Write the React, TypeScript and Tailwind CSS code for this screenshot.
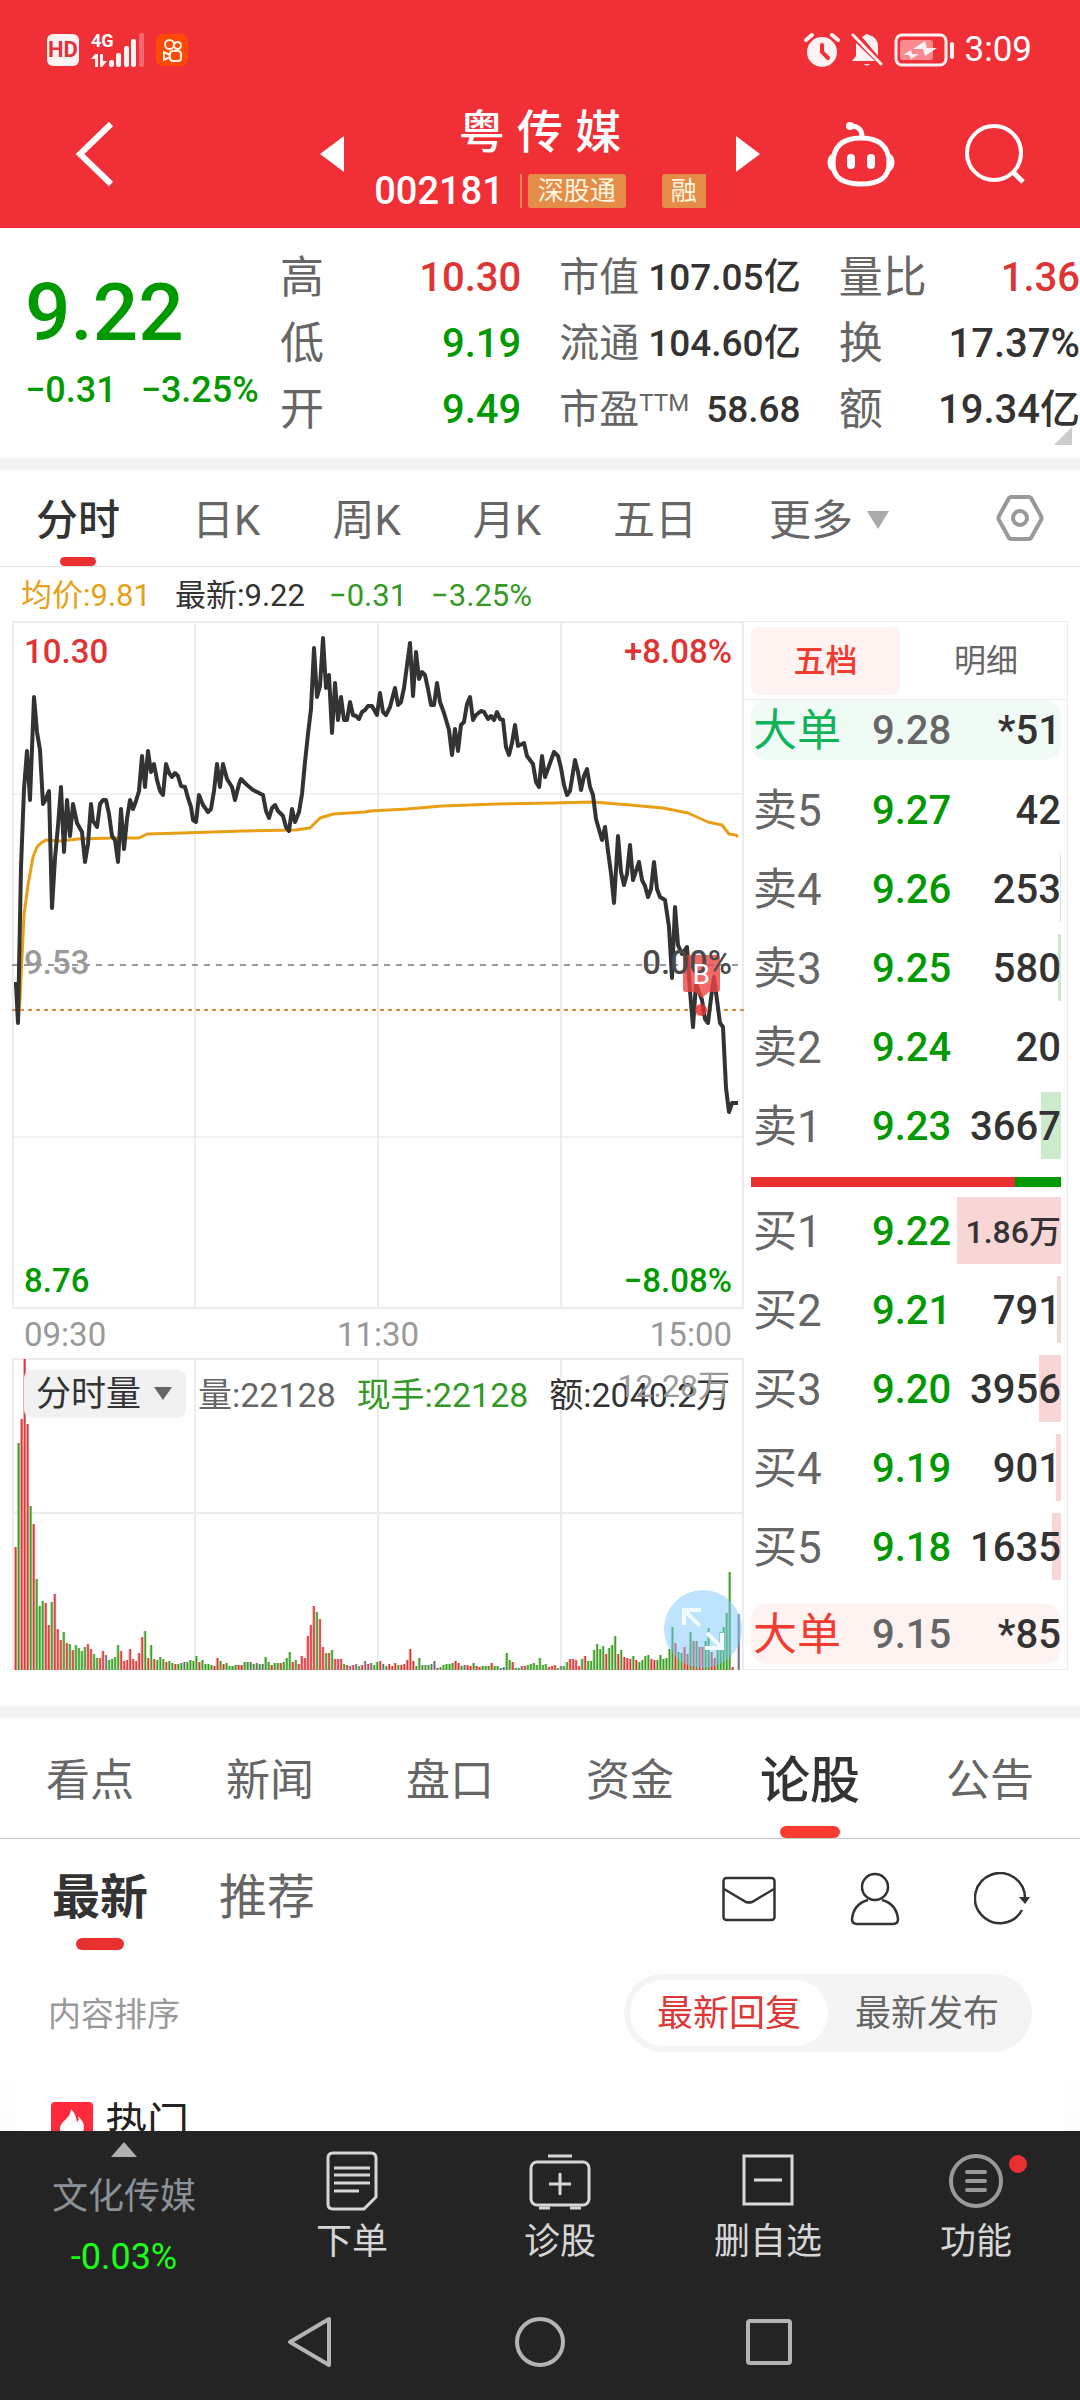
import React, { useState } from 'react'

const priceLine = `2,363 4,363 6,402 9,246 12,168 15,130 18,179 22,76 25,111 28,129 31,183 33,180 37,170 40,287 43,237 46,205 49,166
52,231 55,179 58,215 61,183 65,202 70,211 73,241 76,223 79,183 81,200 85,206 88,183 91,179 94,179 97,193 100,215 103,219
106,241 109,188 112,228 115,198 118,179 121,188 124,180 127,170 130,135 133,166 136,130 139,151 142,143 145,159 148,170
151,174 154,143 157,152 160,156 163,152 166,155 169,165 173,166 176,177 179,186 181,199 184,201 187,174 191,184 196,191
199,188 202,170 205,143 208,166 211,143 215,158 220,166 223,179 227,163 229,158 235,164 241,169 251,174 254,190 257,197
260,187 263,184 266,190 271,195 274,206 277,210 280,188 283,201 287,191 290,173 293,141 296,113 299,88 302,27 305,76
308,65 311,17 314,67 317,54 320,112 323,62 326,99 329,76 332,99 335,99 338,81 341,94 344,95 347,98 350,91 353,89 356,85
360,85 365,94 368,72 371,91 374,94 378,86 383,67 386,84 389,81 392,67 398,22 401,75 404,31 407,58 410,51 413,54 416,68
419,84 422,84 425,62 428,81 432,92 437,109 440,134 443,108 446,130 449,104 452,101 455,83 458,76 461,99 464,94 469,90
472,91 476,98 479,95 482,99 485,91 488,98 491,99 494,126 497,134 500,122 503,104 506,125 512,122 515,135 521,143 524,161
527,166 530,135 533,156 537,145 542,131 546,135 549,147 552,164 555,174 558,170 563,139 566,151 569,169 572,155 575,148
578,166 581,174 584,198 590,219 593,206 596,230 599,252 602,282 606,215 609,251 612,264 615,253 618,224 621,259 627,241
630,259 633,265 636,276 639,268 642,241 645,268 648,276 653,279 657,306 660,357 663,286 666,324 670,333 675,326 678,370
681,406 684,363 690,379 693,398 696,402 699,377 702,356 705,379 708,402 711,406 714,467 717,491 720,482 726,482`

const avgLine = `6,402 8,379 12,294 16,264 21,236 25,226 29,222 34,219 48,220 66,218 101,217 127,217 135,213 170,212 231,210 283,209
298,207 308,197 321,193 353,191 358,190 395,188 430,185 485,183 541,182 581,181 618,184 651,187 676,192 696,201 710,204
717,213 724,214 726,216`

// one entry per minute: r = up, g = down, k = flat
const volume = `r123 g227 r251 r311 r246 g164 r146 g91 g64 g69 r67 r45 g68 r76 r41 r30 g38 r27 g26 r20 g25 g22 g19 g23 r26 r21 g16
g12 r12 r19 k15 g10 g11 g13 g25 r19 r9 r10 r21 r11 r9 r17 r33 g39 r12 g25 r11 g10 g13 g11 r8 g9 g7 r6 g6 g7 k8 g8 g10 g9
g14 r8 g10 g6 g6 g5 r4 r12 g9 r6 g7 g4 g4 g5 r5 r5 g8 g8 k8 g6 k7 g6 k6 g13 g8 r5 g7 g7 r7 g8 g12 g18 r8 g10 r6 r14 r12
r34 r45 r64 g58 r51 r23 g17 r17 g20 r11 r11 r11 g6 r5 k4 r5 k6 g4 r5 k9 r6 k7 g5 g8 r9 k6 g4 r6 r4 r7 g5 r5 r6 r10 r21
r9 g4 g12 k5 g5 g5 k6 k9 r2 g3 g5 g6 g6 g7 r9 r7 g4 k5 r5 r4 g7 r4 r3 g4 g4 g4 r7 g4 g4 k2 k3 g17 g10 r8 g2 g2 k4 r4 g5
g6 g7 g5 g12 g5 g6 r3 r4 r5 g2 k4 g4 g8 r11 r11 r10 r4 g11 r14 g9 g9 g20 g26 g21 g24 r16 g22 g25 g34 r16 g20 r13 r12 r11
g14 r10 g8 g10 g14 g15 r11 r10 g10 g15 g11 g12 g21 g43 r27 g18 g17 r23 r16 g38 r29 g29 r23 r23 g29 g42 r18 r12 g26 g38
g43 g57 g98 r3 k0 k56`.split(/\s+/)

const barColor: Record<string, string> = { r: '#d93636', g: '#3f9a2a', k: '#666b76' }
const barFill: Record<string, string> = { r: '#f7a5a5', g: '#a3d895', k: '#c4c7cf' }

const stats = [
  [
    { k: '高', v: '10.30', c: 'text-[#e03333]' },
    { k: '低', v: '9.19', c: 'text-[#009900]' },
    { k: '开', v: '9.49', c: 'text-[#009900]' },
  ],
  [
    { k: '市值', v: '107.05亿', c: 'text-[#333333]' },
    { k: '流通', v: '104.60亿', c: 'text-[#333333]' },
    { k: '市盈', sup: 'TTM', v: '58.68', c: 'text-[#333333]' },
  ],
  [
    { k: '量比', v: '1.36', c: 'text-[#e03333]' },
    { k: '换', v: '17.37%', c: 'text-[#333333]' },
    { k: '额', v: '19.34亿', c: 'text-[#333333]' },
  ],
]

const sells = [
  { k: '卖5', p: '9.27', q: '42', w: 0 },
  { k: '卖4', p: '9.26', q: '253', w: 1 },
  { k: '卖3', p: '9.25', q: '580', w: 3 },
  { k: '卖2', p: '9.24', q: '20', w: 0 },
  { k: '卖1', p: '9.23', q: '3667', w: 20 },
]

const buys = [
  { k: '买1', p: '9.22', q: '1.86万', w: 104 },
  { k: '买2', p: '9.21', q: '791', w: 4 },
  { k: '买3', p: '9.20', q: '3956', w: 22 },
  { k: '买4', p: '9.19', q: '901', w: 5 },
  { k: '买5', p: '9.18', q: '1635', w: 9 },
]

function StatusBar() {
  return (
    <div className="flex h-8 items-center justify-between pl-[47px] pr-12 text-white">
      <div className="flex h-full items-center">
        <span className="flex h-8 w-8 items-center justify-center rounded-md bg-[#fff2f3] text-[22px] font-bold leading-none text-[#e0333b]">HD</span>
        <div className="ml-3 flex h-[34px] w-5 flex-col justify-between">
          <span className="text-[18px] font-bold leading-4">4G</span>
          <svg viewBox="0 0 16 13" className="h-[13px] w-4" fill="#fff2f3">
            <path d="M4 0h3v13H4V5H0zM9 0h3v7h4l-5 6H9z" />
          </svg>
        </div>
        <svg viewBox="0 0 36 34" className="-ml-[2px] h-[34px] w-9" fill="#fff2f3">
          <rect x="0" y="27" width="5" height="7" rx="2" />
          <rect x="7" y="20" width="5" height="14" rx="2" />
          <rect x="15" y="13" width="5" height="21" rx="2" />
          <rect x="22" y="6" width="5" height="28" rx="2" />
          <rect x="30" y="0" width="5" height="34" rx="2" opacity=".3" />
        </svg>
        <svg viewBox="0 0 32 32" className="ml-[11px] h-8 w-8" fill="none" stroke="#fff3e0" strokeWidth="2">
          <rect width="32" height="32" rx="7" fill="#ff4906" stroke="none" />
          <circle cx="13.500" cy="10.500" r="4.500" />
          <circle cx="21.500" cy="11.500" r="3.500" />
          <rect x="14" y="17" width="11" height="10" rx="3" />
          <path d="M14 21l-6-3v8l6-3" />
        </svg>
      </div>
      <div className="flex items-center">
        <svg viewBox="0 0 36 34" className="h-[34px] w-9" fill="#fff2f3">
          <path d="M2 7l6-5M34 7l-6-5" stroke="#fff2f3" strokeWidth="4" strokeLinecap="round" />
          <circle cx="18" cy="19" r="15" />
          <path d="M18 12v7l6 6" stroke="#f12f37" strokeWidth="4" fill="none" strokeLinecap="round" />
        </svg>
        <svg viewBox="0 0 34 34" className="ml-[10px] h-[34px] w-[34px]" fill="#fff2f3">
          <path d="M12 4q2-1 3-2 2-2 4 0 9 2 9 12v9zM6 10l19 18H2l4-5zM14 31h6q-3 3-6 0z" />
          <path d="M3 2l28 29" stroke="#fff2f3" strokeWidth="3" strokeLinecap="round" />
        </svg>
        <svg viewBox="0 0 62 34" className="ml-[10px] h-[34px] w-[62px]" fill="none">
          <rect x="2" y="2" width="50" height="30" rx="6" stroke="#fff2f3" strokeWidth="3" />
          <rect x="6" y="7" width="33" height="20" rx="3" fill="#f98a8f" />
          <path d="M31 8l-12 8h10l2 7 12-8H33zM17 17l-8 5h6l2 4 8-5h-7z" fill="#fff2f3" />
          <rect x="56" y="9" width="4" height="17" rx="2" fill="#fff2f3" />
        </svg>
        <span className="ml-[9px] text-[35px] leading-8">3:09</span>
      </div>
    </div>
  )
}

function Header() {
  return (
    <header className="bg-[#f12f37] pb-2 pt-[34px] text-white">
      <StatusBar />
      <div className="mt-[22px] grid h-[132px] grid-cols-[1fr_auto_1fr] items-center">
        <button aria-label="返回" className="justify-self-start pl-[75px]">
          <svg viewBox="0 0 40 66" className="h-[66px] w-10" fill="none" stroke="#fff" strokeWidth="6">
            <path d="M36 3L5 33l31 30" />
          </svg>
        </button>
        <div className="flex items-center">
          <button aria-label="上一只">
            <svg viewBox="0 0 24 36" className="h-9 w-6" fill="#fff"><path d="M24 0v36L0 18z" /></svg>
          </button>
          <div className="mx-[30px] flex flex-col items-center pt-3">
            <h1 className="font-['Inter','Noto_Sans_CJK_SC',sans-serif] text-[46px] font-medium leading-[62px]">粤 传 媒</h1>
            <div className="flex h-[58px] items-center">
              <span className="text-[38px] font-medium leading-[58px]">002181</span>
              <span className="ml-4 h-[34px] w-[2px] bg-[#f58a52]" />
              <span className="ml-[6px] h-[34px] rounded-[3px] bg-[#e58c48] px-[10px] text-[26px] leading-[34px] text-[#fff6e0]">深股通</span>
              <span className="ml-9 h-[34px] rounded-l-[3px] bg-[#e58c48] px-[9px] text-[26px] leading-[34px] text-[#fff6e0]">融</span>
            </div>
          </div>
          <button aria-label="下一只">
            <svg viewBox="0 0 24 36" className="h-9 w-6" fill="#fff"><path d="M0 0v36l24-18z" /></svg>
          </button>
        </div>
        <div className="flex items-center gap-[68px] justify-self-end pr-[54px]">
          <button aria-label="智能助手">
            <svg viewBox="0 0 70 66" className="h-[66px] w-[70px]" fill="none" stroke="#fff" strokeWidth="5">
              <path d="M35 17C16 17 7 26 7 42c0 15 10 21 28 21s28-6 28-21c0-16-9-25-28-25z" />
              <path d="M36 16c0-8-4-11-12-11" />
              <circle cx="24" cy="5" r="4" fill="#fff" stroke="none" />
              <path d="M6 33c-6 2-6 15 0 17zM64 33c6 2 6 15 0 17z" fill="#fff" stroke="none" />
              <path d="M25 37v7M45 37v7" strokeWidth="8" strokeLinecap="round" />
            </svg>
          </button>
          <button aria-label="搜索">
            <svg viewBox="0 0 62 62" className="h-[62px] w-[62px]" fill="none" stroke="#fff" strokeWidth="4">
              <circle cx="30" cy="30" r="27" />
              <path d="M49 49l10 10" strokeWidth="5" />
            </svg>
          </button>
        </div>
      </div>
    </header>
  )
}

function Quote() {
  return (
    <section className="relative flex h-[230px] items-start pt-[17px]">
      <div className="w-[280px] shrink-0 whitespace-nowrap pl-[25px] pt-[18px] font-medium text-[#009900]">
        <p className="text-[80px] leading-[100px]">9.22</p>
        <p className="flex gap-6 text-[36px] leading-[54px]">
          <span>−0.31</span>
          <span>−3.25%</span>
        </p>
      </div>
      <div className="grid flex-1 grid-cols-3 gap-[38px]">
        {stats.map((col, i) => (
          <dl key={i}>
            {col.map((s) => (
              <div key={s.k} className="flex h-[66px] items-center justify-between whitespace-nowrap">
                <dt className={i === 1 ? 'text-[40px] text-[#666666]' : 'text-[44px] text-[#666666]'}>
                  {s.k}
                  {s.sup && <sup className="text-[24px]">{s.sup}</sup>}
                </dt>
                <dd className={`${i === 1 ? 'text-[37px]' : 'text-[40px]'} font-medium ${s.c}`}>{s.v}</dd>
              </div>
            ))}
          </dl>
        ))}
      </div>
      <svg viewBox="0 0 18 18" className="absolute bottom-[13px] right-2 h-[18px] w-[18px]" fill="#cccccc"><path d="M18 0v18H0z" /></svg>
    </section>
  )
}

function PeriodTabs() {
  const [active, setActive] = useState('分时')
  const tabs = ['分时', '日K', '周K', '月K', '五日']
  return (
    <nav className="flex h-[97px] items-center gap-[72px] border-b border-[#e2e2e2] pl-9 pr-9 text-[42px] text-[#666666]">
      {tabs.map((t) => (
        <button key={t} onClick={() => setActive(t)}
          className={`relative flex h-full items-center pt-1 ${active === t ? 'font-medium text-[#333333]' : ''}`}>
          {t}
          {active === t && <span className="absolute bottom-0 left-1/2 h-[9px] w-9 -translate-x-1/2 rounded-full bg-[#e83030]" />}
        </button>
      ))}
      <button aria-haspopup="menu" className="flex items-center gap-[14px] pt-1">
        更多
        <svg viewBox="0 0 22 18" className="h-[18px] w-[22px]" fill="#aaaaaa"><path d="M0 0h22L11 18z" /></svg>
      </button>
      <button aria-label="设置" className="ml-auto">
        <svg viewBox="0 0 48 48" className="h-12 w-12" fill="none" stroke="#999999" strokeWidth="4" strokeLinejoin="round">
          <path d="M15 3h18q1 0 2 1l10 18q1 2 0 4L35 44q-1 1-2 1H15q-1 0-2-1L3 26q-1-2 0-4L13 4q1-1 2-1z" />
          <circle cx="24" cy="24" r="7" />
        </svg>
      </button>
    </nav>
  )
}

function PriceChart() {
  return (
    <div className="relative h-[688px] text-[33px] font-medium leading-8">
      <svg viewBox="0 0 732 688" preserveAspectRatio="none" className="h-full w-full" fill="none">
        <path d="M1 1h730v686H1zM183 0v688M366 0v688M549 0v688" stroke="#ececec" strokeWidth="2" />
        <path d="M0 173h732M0 516h732" stroke="#e4e4e4" />
        <path d="M0 344h732" stroke="#999999" strokeWidth="2" strokeDasharray="6 6" />
        <path d="M0 389h732" stroke="#d98a48" strokeWidth="2" strokeDasharray="4 4" />
        <polyline points={avgLine} stroke="#e89f15" strokeWidth="3" strokeLinejoin="round" />
        <polyline points={priceLine} stroke="#333333" strokeWidth="4" strokeLinejoin="round" />
        <g opacity=".8">
          <path d="M674 334h31q3 0 3 3v31q0 3-3 3h-8l-7 6-7-6h-9q-3 0-3-3v-31q0-3 3-3z" fill="#ee4444" />
          <circle cx="689" cy="389" r="6" fill="#e83030" />
        </g>
      </svg>
      <span className="absolute left-3 top-[15px] text-[#e03333]">10.30</span>
      <span className="absolute right-3 top-[15px] text-[#e03333]">+8.08%</span>
      <span className="absolute left-3 top-[326px] text-[#999999]">9.53</span>
      <span className="absolute right-3 top-[326px] text-[#4a4a4a]">0.00%</span>
      <span className="absolute right-[34px] top-[338px] text-[28px] font-normal text-white">B</span>
      <span className="absolute bottom-3 left-3 text-[#009900]">8.76</span>
      <span className="absolute bottom-3 right-3 text-[#009900]">−8.08%</span>
    </div>
  )
}

function VolumeChart() {
  return (
    <div className="relative h-[312px]">
      <svg viewBox="0 0 732 312" preserveAspectRatio="none" className="h-full w-full" fill="none">
        <path d="M0 1h732M1 0v312M183 0v312M366 0v312M549 0v312M731 0v312M0 155h732" stroke="#ececec" strokeWidth="2" />
        {volume.map((v, i) => {
          const h = Number(v.slice(1))
          const x = 2 + i * 3.013
          return (
            <g key={i}>
              <rect x={x} y={312 - h} width="3" height={h} fill={barFill[v[0]]} />
              <rect x={x + 1} y={312 - h} width="1.400" height={h} fill={barColor[v[0]]} />
            </g>
          )
        })}
      </svg>
      <div className="absolute inset-x-0 top-3 flex h-12 items-center whitespace-nowrap pl-3 text-[34px] text-[#666666]">
        <div className="relative">
          <select aria-label="指标" className="h-12 w-[162px] appearance-none rounded-lg bg-[#f1f1f1] pl-3 pt-[2px] text-[35px] leading-[46px] text-[#333333]">
            <option>分时量</option>
          </select>
          <svg viewBox="0 0 18 13" className="pointer-events-none absolute right-[14px] top-[18px] h-[13px] w-[18px]" fill="#666666"><path d="M0 0h18L9 13z" /></svg>
        </div>
        <div className="flex flex-1 items-center justify-between pl-3 pr-[14px] pt-[2px]">
          <span>量:22128</span>
          <span className="text-[#349924]">现手:22128</span>
          <span className="text-[#333333]">额:2040.2万</span>
        </div>
      </div>
      <span className="absolute right-[14px] top-2 text-[32px] leading-10 text-[#999999]">12.28万</span>
      <button aria-label="全屏" className="absolute bottom-[2px] right-[2px] flex h-[78px] w-[78px] items-center justify-center rounded-full bg-[#7cc8ff]/50">
        <svg viewBox="0 0 44 44" className="h-11 w-11" fill="none" stroke="#f2fcff" strokeWidth="4">
          <path d="M3 18V3h17M4 4l15 15M41 26v15H24M40 40L26 26" />
        </svg>
      </button>
    </div>
  )
}

type Row = { k: string; p: string; q: string; w: number }

function BookRow({ row, bar }: { row: Row; bar: string }) {
  return (
    <tr className="relative flex h-[79px] items-center pl-[2px] pt-[3px]">
      <td className="w-[119px] text-[44px] text-[#666666]">{row.k}</td>
      <td className="text-[40px] font-medium text-[#009900]">{row.p}</td>
      <td className={`flex-1 text-right font-medium text-[#333333] ${row.q.includes('万') ? 'text-[32px]' : 'text-[40px]'}`}>
        <span className={`absolute right-0 top-[6px] h-[67px] ${bar}`} style={{ width: row.w }} />
        <span className="relative">{row.q}</span>
      </td>
    </tr>
  )
}

function BigRow({ price, qty, color }: { price: string; qty: string; color: string }) {
  return (
    <tr className={`flex h-[60px] items-center rounded-2xl pl-[2px] pt-[2px] ${color}`}>
      <td className="w-[119px] text-[44px]">大单</td>
      <td className="text-[40px] font-medium text-[#666666]">{price}</td>
      <td className="flex-1 text-right text-[40px] font-medium text-[#333333]">{qty}</td>
    </tr>
  )
}

function OrderBook() {
  return (
    <aside className="flex w-[324px] shrink-0 flex-col whitespace-nowrap border border-l-0 border-[#ececec] leading-none">
      <div className="flex h-[78px] items-center border-b border-[#ececec] px-[7px] text-[32px]">
        <button className="h-[68px] w-[149px] rounded-lg bg-[#fff3f2] font-medium text-[#f23c32]">五档</button>
        <button className="h-[68px] flex-1 pl-3 text-[#666666]">明细</button>
      </div>
      <div className="pl-[7px] pr-[6px]">
        <table className="block">
          <tbody className="block">
            <BigRow price="9.28" qty="*51" color="bg-[#f1fbf6] text-[#0fb35a] mb-[10px]" />
            {sells.map((r) => <BookRow key={r.k} row={r} bar="bg-[#cdeacd]" />)}
          </tbody>
        </table>
        <div className="mb-1 mt-3 flex h-[10px] bg-[#009900]">
          <div className="w-[85%] bg-[#e83030]" />
        </div>
        <table className="block">
          <tbody className="block">
            {buys.map((r) => <BookRow key={r.k} row={r} bar="bg-[#f9d6d6]" />)}
            <BigRow price="9.15" qty="*85" color="bg-[#fff3f2] text-[#f23c32] mt-[18px]" />
          </tbody>
        </table>
      </div>
    </aside>
  )
}

function Market() {
  return (
    <section className="pb-9">
      <div className="flex h-[54px] items-center gap-6 pl-[21px] pt-[5px] text-[31px] text-[#349924]">
        <span className="text-[#e89f15]">均价:9.81</span>
        <span className="text-[#333333]">最新:9.22</span>
        <span>−0.31</span>
        <span>−3.25%</span>
      </div>
      <div className="flex px-3">
        <div className="min-w-0 flex-1">
          <PriceChart />
          <div className="flex h-[49px] items-center justify-between px-3 pt-[2px] text-[33px] text-[#999999]">
            <span>09:30</span>
            <span>11:30</span>
            <span>15:00</span>
          </div>
          <VolumeChart />
        </div>
        <OrderBook />
      </div>
    </section>
  )
}

function Forum() {
  const [tab, setTab] = useState('论股')
  const tabs = ['看点', '新闻', '盘口', '资金', '论股', '公告']
  return (
    <section>
      <nav className="grid h-[121px] grid-cols-6 border-b border-[#c9c9c9]">
        {tabs.map((t) => (
          <button key={t} onClick={() => setTab(t)}
            className={`relative pt-[6px] ${tab === t ? 'text-[50px] font-medium text-[#333333]' : 'text-[44px] text-[#666666]'}`}>
            {t}
            {tab === t && <span className="absolute bottom-0 left-1/2 h-3 w-[60px] -translate-x-1/2 rounded-full bg-[#fb3b31]" />}
          </button>
        ))}
      </nav>
      <div className="flex h-[118px] items-center pl-[52px] pr-[50px] text-[48px] text-[#666666]">
        <button className="relative h-full font-bold text-[#333333]">
          最新
          <span className="absolute bottom-[7px] left-1/2 h-3 w-12 -translate-x-1/2 rounded-full bg-[#e83030]" />
        </button>
        <button className="ml-[71px] h-full">推荐</button>
        <div className="ml-auto flex items-center gap-[74px] pt-[2px]">
          <button aria-label="私信">
            <svg viewBox="0 0 54 46" className="h-[46px] w-[54px]" fill="none" stroke="#333333" strokeWidth="2.500">
              <rect x="1.500" y="2" width="51" height="42" rx="3" />
              <path d="M2 13l22 13q3 1 6 0l22-13" />
            </svg>
          </button>
          <button aria-label="我的">
            <svg viewBox="0 0 50 54" className="h-[54px] w-[50px]" fill="none" stroke="#333333" strokeWidth="2.500">
              <circle cx="25" cy="15" r="13" />
              <path d="M18 28C7 31 3 38 2 47q0 5 5 5h36q5 0 5-5c-1-9-5-16-16-19" />
            </svg>
          </button>
          <button aria-label="刷新">
            <svg viewBox="0 0 56 54" className="h-[54px] w-14" fill="none" stroke="#333333" strokeWidth="2.500">
              <path d="M48 38A25 25 0 1 1 51 26" />
              <path d="M45 25h11l-5 7z" fill="#333333" stroke="none" />
            </svg>
          </button>
        </div>
      </div>
      <div className="flex h-28 items-center justify-between pl-12 pr-12">
        <span className="pt-1 text-[33px] text-[#999999]">内容排序</span>
        <div className="flex h-[78px] rounded-full bg-[#f4f4f4] p-[6px] text-[36px]">
          <button className="w-[198px] rounded-full bg-white pt-[2px] text-[#dd3737]">最新回复</button>
          <button className="w-[198px] pt-[2px] text-[#666666]">最新发布</button>
        </div>
      </div>
      <div className="mt-2 bg-linear-to-b from-white to-[#fafafa] px-[17px]">
        <div className="flex h-20 items-center bg-white pl-[34px] pt-3">
          <svg viewBox="0 0 42 42" className="h-[42px] w-[42px]">
            <rect width="42" height="42" rx="4" fill="#ff2a3c" />
            <path d="M20 7c6 6 5 11 6 13 2-2 2-4 1-6 6 6 7 10 5 16-2 5-6 8-11 8-7 0-12-5-12-11 0-8 10-9 11-20z" fill="#fff" />
          </svg>
          <h2 className="ml-3 text-[42px] text-[#222222]">热门</h2>
        </div>
      </div>
    </section>
  )
}

function BottomBar() {
  return (
    <footer className="shrink-0 bg-[#242424]">
      <nav className="flex h-[148px] whitespace-nowrap text-[36px] leading-10 text-[#d6d6d6]">
        <a href="#" className="flex w-[248px] flex-col items-center pt-[11px] text-[#8b9297]">
          <svg viewBox="0 0 26 15" className="h-[15px] w-[26px]" fill="#b0b0b0"><path d="M13 0l13 15H0z" /></svg>
          <span className="mt-5">文化传媒</span>
          <span className="mt-5 text-[#1aff1a]">-0.03%</span>
        </a>
        <button className="flex flex-1 flex-col items-center pt-5">
          <svg viewBox="0 0 52 60" className="h-[60px] w-[52px]" fill="none" stroke="#d6d6d6" strokeWidth="3">
            <path d="M7 2h38q5 0 5 5v39L38 58H7q-5 0-5-5V7q0-5 5-5z" />
            <path d="M8 17h36M8 24h36M8 32h36M8 40h25" />
          </svg>
          <span className="mt-[11px]">下单</span>
        </button>
        <button className="flex flex-1 flex-col items-center pt-5">
          <svg viewBox="0 0 62 60" className="h-[60px] w-[62px]" fill="none" stroke="#d6d6d6" strokeWidth="3">
            <path d="M19 5h24" />
            <rect x="2" y="11" width="58" height="43" rx="6" />
            <path d="M31 22v22M20 33h22" />
            <path d="M10 57h11M41 57h11" />
          </svg>
          <span className="mt-[11px]">诊股</span>
        </button>
        <button className="flex flex-1 flex-col items-center pt-5">
          <svg viewBox="0 0 52 60" className="h-[60px] w-[52px]" fill="none" stroke="#dcdcdc" strokeWidth="3">
            <rect x="2" y="5" width="48" height="48" />
            <path d="M12 29h28" />
          </svg>
          <span className="mt-[11px]">删自选</span>
        </button>
        <button className="flex flex-1 flex-col items-center pt-5">
          <span className="relative">
            <svg viewBox="0 0 56 60" className="h-[60px] w-14" fill="none" stroke="#999999" strokeWidth="4">
              <circle cx="28" cy="30" r="25" />
              <path d="M19 21h18M19 30h18M19 39h18" strokeLinecap="round" />
            </svg>
            <span className="absolute -right-[23px] top-1 h-[18px] w-[18px] rounded-full bg-[#e83030]" />
          </span>
          <span className="mt-[11px]">功能</span>
        </button>
      </nav>
      <div className="flex h-[121px] items-start justify-center gap-[179px] pt-9">
        <button aria-label="后退">
          <svg viewBox="0 0 50 54" className="h-[54px] w-[50px]" fill="none" stroke="#b4b4b4" strokeWidth="4" strokeLinejoin="round">
            <path d="M43 4v46L4 27z" />
          </svg>
        </button>
        <button aria-label="主页">
          <svg viewBox="0 0 50 54" className="h-[54px] w-[50px]" fill="none" stroke="#b4b4b4" strokeWidth="4">
            <circle cx="25" cy="27" r="23" />
          </svg>
        </button>
        <button aria-label="最近任务">
          <svg viewBox="0 0 50 54" className="h-[54px] w-[50px]" fill="none" stroke="#b4b4b4" strokeWidth="4">
            <rect x="4" y="6" width="42" height="42" rx="2" />
          </svg>
        </button>
      </div>
    </footer>
  )
}

export default function App() {
  return (
    <div className="flex h-screen flex-col bg-white font-['Roboto','Noto_Sans_CJK_SC',sans-serif]">
      <Header />
      <main className="min-h-0 flex-1 overflow-hidden">
        <Quote />
        <div className="h-3 bg-[#f4f4f4]" />
        <PeriodTabs />
        <Market />
        <div className="h-3 bg-[#f4f4f4]" />
        <Forum />
      </main>
      <BottomBar />
    </div>
  )
}
